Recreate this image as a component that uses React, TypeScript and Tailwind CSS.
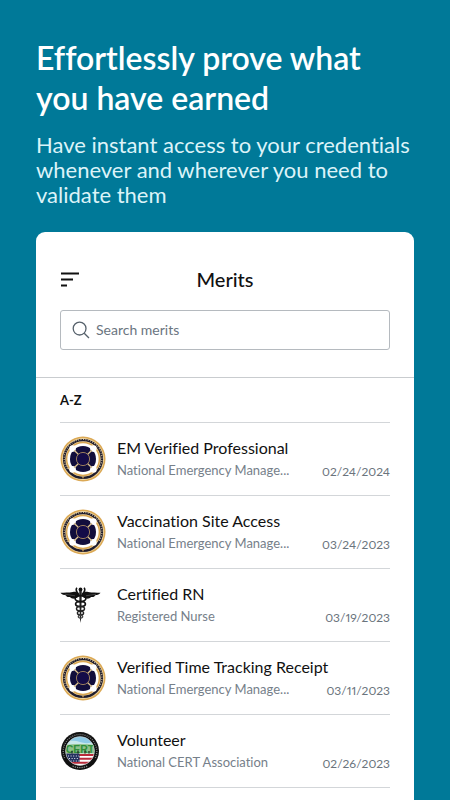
import React from 'react';

interface Merit {
  id: number;
  title: string;
  org: string;
  date: string;
  badge: 'seal' | 'nurse' | 'cert';
}

const MERITS: Merit[] = [
  { id: 1, title: 'EM Verified Professional', org: 'National Emergency Manage...', date: '02/24/2024', badge: 'seal' },
  { id: 2, title: 'Vaccination Site Access', org: 'National Emergency Manage...', date: '03/24/2023', badge: 'seal' },
  { id: 3, title: 'Certified RN', org: 'Registered Nurse', date: '03/19/2023', badge: 'nurse' },
  { id: 4, title: 'Verified Time Tracking Receipt', org: 'National Emergency Manage...', date: '03/11/2023', badge: 'seal' },
  { id: 5, title: 'Volunteer', org: 'National CERT Association', date: '02/26/2023', badge: 'cert' },
];

const SealBadge: React.FC = () => (
  <svg className="w-[46px] h-[46px]" viewBox="0 0 46 46" fill="none" aria-hidden="true">
    <circle cx="23" cy="23" r="22.5" fill="#dba955" />
    <circle cx="23" cy="23" r="20.9" fill="#efd7a6" />
    <circle cx="23" cy="23" r="18.9" stroke="#1f1c2c" strokeWidth="2.4" />
    {/* lettering around the upper rim */}
    <path d="M7.4 33A18.9 18.9 0 1 1 38.6 33" stroke="#d8c8a4" strokeWidth="1.2" strokeDasharray="0.9 1.5" />
    <circle cx="23" cy="41.8" r="0.8" fill="#d9a653" />
    <circle cx="23" cy="23" r="16.4" fill="#fff" stroke="#d9a653" strokeWidth="1.5" />
    <circle cx="23" cy="23" r="13" fill="#120e3c" />
    <g fill="#fff">
      <circle cx="12.6" cy="12.6" r="3.3" />
      <circle cx="33.4" cy="12.6" r="3.3" />
      <circle cx="12.6" cy="33.4" r="3.3" />
      <circle cx="33.4" cy="33.4" r="3.3" />
    </g>
    <path d="M14.2 14.2L31.8 31.8M31.8 14.2L14.2 31.8" stroke="#dfc491" strokeWidth="1.3" />
    <circle cx="23" cy="23" r="6.6" fill="#140c48" stroke="#a8895f" strokeWidth="0.9" />
  </svg>
);

const NurseBadge: React.FC = () => (
  <svg className="w-[41px] h-[37px]" viewBox="0 0 41 37" fill="none" aria-hidden="true">
    <path d="M19 7.2C16.8 4.2 14.8 4.4 12.8 5C8.6 6 4.5 5.4 0.5 5.8C2 8.2 4.8 8 6 8.4C6.6 10 8.6 10 10 10.1C11 11.4 12.8 11.8 14.2 11.6C16.2 11.3 18.2 10.4 19 9Z" fill="#111" />
    <path d="M22 7.2C24.2 4.2 26.2 4.4 28.2 5C32.4 6 36.5 5.4 40.5 5.8C39 8.2 36.2 8 35 8.4C34.4 10 32.4 10 31 10.1C30 11.4 28.2 11.8 26.8 11.6C24.8 11.3 22.8 10.4 22 9Z" fill="#111" />
    <path d="M5 7.2L15 8.8M36 7.2L26 8.8" stroke="#777" strokeWidth="0.5" />
    <circle cx="20.5" cy="2.4" r="1.9" fill="#111" />
    <path d="M17 0.8C14.4 3.4 17.8 5.6 19 8M24 0.8C26.6 3.4 23.2 5.6 22 8" stroke="#111" strokeWidth="1.6" />
    <path d="M19.2 4H21.8L21.2 31L20.5 36L19.8 31Z" fill="#222" />
    <ellipse cx="20.5" cy="11.6" rx="5.4" ry="3" stroke="#111" strokeWidth="1.7" />
    <ellipse cx="20.5" cy="17" rx="4.9" ry="2.5" stroke="#111" strokeWidth="1.7" />
    <ellipse cx="20.5" cy="21.8" rx="4" ry="2.2" stroke="#222" strokeWidth="1.5" />
    <ellipse cx="20.5" cy="26" rx="3.1" ry="1.9" stroke="#222" strokeWidth="1.4" />
    <ellipse cx="20.5" cy="29.6" rx="2.2" ry="1.5" stroke="#444" strokeWidth="1.2" />
  </svg>
);

const CertBadge: React.FC = () => (
  <svg className="w-[40px] h-[40px]" viewBox="0 0 40 40" fill="none" aria-hidden="true">
    <defs>
      <clipPath id="cert-face">
        <circle cx="20" cy="20" r="14.4" />
      </clipPath>
    </defs>
    <circle cx="20" cy="20" r="19" fill="#111" />
    <path d="M4.6 27A16.8 16.8 0 1 1 35.4 27" stroke="#8a8a8a" strokeWidth="1.3" strokeDasharray="0.9 1.2" />
    <path d="M12.5 35Q20 38.4 27.5 35" stroke="#8a8a8a" strokeWidth="1.3" strokeDasharray="1.3 1" />
    <g clipPath="url(#cert-face)">
      <rect x="5" y="5" width="30" height="18" fill="#8fcbe6" />
      <path d="M5 11Q13 8.5 20 11T35 10.5V15H5Z" fill="#c9e8ea" />
      <path d="M5 14Q20 12 35 14V24H5Z" fill="#8fc08a" />
      <rect x="5" y="22.5" width="30" height="13" fill="#fff" />
      <path d="M19 24H35M19 27.8H35M5 31.8H35" stroke="#b92b3b" strokeWidth="1.9" />
      <rect x="5" y="22.5" width="14.5" height="8.5" fill="#23305f" />
      <path d="M8 25H19M9 27.5H19M8 30H19" stroke="#fff" strokeWidth="0.9" strokeDasharray="1 1.6" />
    </g>
    <text x="20" y="21.6" textAnchor="middle" fontSize="10.5" fontWeight="700" fontFamily="Liberation Sans, sans-serif" fill="#2f8f39">
      CERT
    </text>
    <path d="M12 22.4V20M18 22.4V19.6M25 22.4V19.8M29 22.4V20" stroke="#1e3024" strokeWidth="1.3" />
    <circle cx="20" cy="20" r="14.4" stroke="#ccc" strokeWidth="0.6" />
  </svg>
);

const Badge: React.FC<{ kind: Merit['badge'] }> = ({ kind }) => {
  if (kind === 'nurse') return <NurseBadge />;
  if (kind === 'cert') return <CertBadge />;
  return <SealBadge />;
};

const MeritRow: React.FC<{ merit: Merit }> = ({ merit }) => (
  <li className="flex h-[73px] items-center border-t border-[#d3d6d9]">
    <div className="w-[57px] shrink-0">
      <Badge kind={merit.badge} />
    </div>
    <div className="min-w-0 flex-1 pt-1">
      <h3 className="text-[16px] leading-[22px] text-[#111]">{merit.title}</h3>
      <div className="flex items-start justify-between">
        <p className="truncate text-[13px] leading-[22px] text-[#76808a]">{merit.org}</p>
        <time className="text-[12px] leading-[26px] text-[#6b747d] proportional-nums">{merit.date}</time>
      </div>
    </div>
  </li>
);

const App: React.FC = () => {
  return (
    <div className="flex min-h-screen flex-col bg-[#007998] px-9 pt-[38px] font-['Lato',sans-serif] [font-variant-ligatures:none]">
      <header className="mb-[25px] text-white">
        <h1 className="text-[32px] font-semibold leading-10">
          Effortlessly prove what
          <br />
          you have earned
        </h1>
        <p className="mt-[14px] text-[22px] leading-[25px] text-[#dcf3f8]">
          Have instant access to your credentials whenever and wherever you need to validate them
        </p>
      </header>

      <main className="flex-1 rounded-t-[9px] bg-white">
        <div className="border-b border-[#c9cccf] px-6 pb-[27px] pt-8">
          <div className="grid grid-cols-[1fr_auto_1fr] items-center">
            <button type="button" aria-label="Sort" className="justify-self-start">
              <svg className="h-[15px] w-[19px]" viewBox="0 0 19 15" fill="none" stroke="#111" strokeWidth="1.8">
                <path d="M1 1.5H19M1 7.5H13M1 13.5H7" />
              </svg>
            </button>
            <h2 className="text-[20px] font-medium leading-[30px] text-[#111]">Merits</h2>
          </div>
          <label className="mt-4 flex h-10 items-center gap-[6px] rounded-[3px] border border-[#b5babf] px-[11px]">
            <svg className="h-[18px] w-[18px] shrink-0" viewBox="0 0 18 18" fill="none" stroke="#56616b" strokeWidth="1.3">
              <circle cx="7.6" cy="7.6" r="6.4" />
              <path d="M12.2 12.2L17 17" />
            </svg>
            <input
              type="search"
              aria-label="Search merits"
              placeholder="Search merits"
              className="w-full bg-transparent text-[14px] leading-5 text-[#111] outline-none placeholder:text-[#6b757f]"
            />
          </label>
        </div>

        <section className="px-6">
          <h2 className="py-[11px] text-[13px] font-bold leading-[22px] text-[#111]">A-Z</h2>
          <ul className="border-b border-[#d3d6d9]">
            {MERITS.map((merit) => (
              <MeritRow key={merit.id} merit={merit} />
            ))}
          </ul>
        </section>
      </main>
    </div>
  );
};

export default App;
